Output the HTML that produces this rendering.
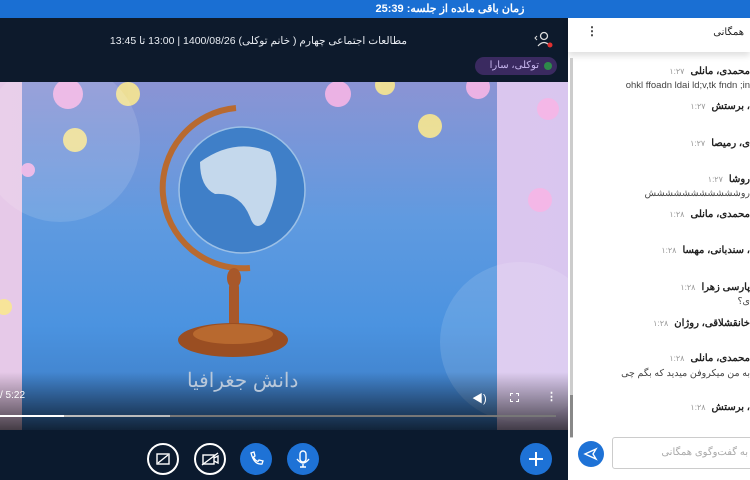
<!DOCTYPE html>
<html><head><meta charset="utf-8"><style>
*{margin:0;padding:0;box-sizing:border-box}
body{width:750px;height:480px;overflow:hidden;font-family:"Liberation Sans","Noto Sans CJK SC",sans-serif;background:#fff;position:relative}
.top{position:absolute;left:0;top:0;width:750px;height:18px;background:#1a6fd3;color:#fff;font-size:11px;font-weight:bold;text-align:center;line-height:18px;padding-left:150px}
.left{position:absolute;left:0;top:18px;width:568px;height:462px;background:#0d1a2c}
.hdr{position:absolute;right:343px;top:35px;color:#e8ecf2;font-size:10.5px;direction:rtl;white-space:nowrap}
.tag{position:absolute;left:475px;top:57px;width:82px;height:18px;border-radius:9px;background:#3a2a60;color:#c9b8f0;font-size:10px;direction:rtl;line-height:18px;padding-right:18px}
.tag:after{content:"";position:absolute;right:5px;top:5px;width:8px;height:8px;border-radius:50%;background:#2e8a4a}
.video{position:absolute;left:0;top:82px;width:568px;height:348px;background:linear-gradient(90deg,#e6c9e8,#d9c6ef);overflow:hidden}
.inner{position:absolute;left:22px;top:0;width:475px;height:348px;background:linear-gradient(180deg,#8b94d4 0%,#5f9ae0 40%,#4b93e0 70%,#3a78c0 100%)}
.shade{position:absolute;left:0;top:290px;width:568px;height:58px;background:linear-gradient(180deg,rgba(0,0,0,0),rgba(0,0,0,.7))}
.bottom{position:absolute;left:0;top:430px;width:568px;height:50px;background:#0b1a2e}
.btn{position:absolute;top:443px;width:32px;height:32px;border-radius:50%;background:#1e72d6}
.obtn{position:absolute;top:443px;width:32px;height:32px;border-radius:50%;border:2px solid #fff}
.right{position:absolute;left:568px;top:18px;width:182px;height:462px;background:#fff}
.msg{position:absolute;right:0;direction:rtl;font-size:10px;color:#222;white-space:nowrap}
.msg b{font-weight:bold}
.msg span{color:#999;font-size:8px;margin-right:6px}
.txt{position:absolute;right:0;direction:rtl;font-size:9.5px;color:#444;white-space:nowrap}
</style></head><body>
<div class="top">زمان باقی مانده از جلسه: 25:39</div>
<div class="left"></div>
<div class="hdr">مطالعات اجتماعی چهارم ( خانم توکلی) 1400/08/26 | 13:00 تا 13:45</div>
<svg style="position:absolute;left:534px;top:30px" width="20" height="20"><circle cx="10" cy="6" r="3.5" fill="none" stroke="#ddd" stroke-width="1.3"/><path d="M4 16 Q10 9 16 16" fill="none" stroke="#ddd" stroke-width="1.3"/><path d="M3 6 L1 8 L3 10" fill="none" stroke="#ddd"/><circle cx="16" cy="15" r="2.5" fill="#e03030"/></svg>
<div class="tag">توکلی، سارا</div>
<div class="video">
 <div class="inner"></div>
 <svg style="position:absolute;left:0;top:0" width="568" height="348">
  <g fill="#f6b5e6" opacity=".9"><circle cx="68" cy="12" r="15"/><circle cx="338" cy="12" r="13"/><circle cx="478" cy="5" r="12"/><circle cx="548" cy="27" r="11"/><circle cx="540" cy="118" r="12"/><circle cx="28" cy="88" r="7"/></g>
  <g fill="#f8e790" opacity=".9"><circle cx="128" cy="12" r="12"/><circle cx="430" cy="44" r="12"/><circle cx="75" cy="58" r="12"/><circle cx="385" cy="3" r="10"/><circle cx="4" cy="225" r="8"/></g>
  <g fill="#fff" opacity=".12"><circle cx="60" cy="60" r="80"/><circle cx="520" cy="260" r="80"/></g>
  <path d="M236 26 A80 80 0 0 0 250 186" fill="none" stroke="#b86a30" stroke-width="6"/>
  <circle cx="242" cy="108" r="63" fill="#3f7fc8"/>
  <path d="M200 80 Q235 55 270 70 Q285 100 265 140 Q255 150 250 135 Q240 110 215 112 Q200 105 200 80Z" fill="#c4d8ec"/>
  <circle cx="242" cy="108" r="63" fill="none" stroke="#9cc0e6" stroke-width="1.5"/>
  <ellipse cx="234" cy="196" rx="7" ry="10" fill="#a8582a"/>
  <rect x="229" y="200" width="10" height="50" rx="5" fill="#a8582a"/>
  <ellipse cx="233" cy="258" rx="55" ry="17" fill="#9a4e22"/>
  <ellipse cx="233" cy="252" rx="40" ry="10" fill="#b8692f"/>
 </svg>
 <div class="shade"></div>
 <div style="position:absolute;left:187px;top:286px;font-size:20px;color:#b9c8da;direction:rtl">دانش جغرافیا</div>
 <div style="position:absolute;left:0;top:308px;font-size:10px;color:#fff">/ 5:22</div>
 <div style="position:absolute;left:0;top:333px;width:556px;height:2px;background:#777"></div>
 <div style="position:absolute;left:0;top:333px;width:170px;height:2px;background:#bbb"></div>
 <div style="position:absolute;left:0;top:333px;width:64px;height:2px;background:#fff"></div>
 <div style="position:absolute;left:472px;top:308px;color:#fff;font-size:11px">◀)</div>
 <div style="position:absolute;left:510px;top:311px;width:9px;height:9px;border:1.5px dashed #fff"></div>
 <div style="position:absolute;left:546px;top:308px;color:#fff;font-size:11px;font-weight:bold">⋮</div>
</div>
<div class="bottom"></div>
<div class="obtn" style="left:147px"><svg width="28" height="28"><rect x="8" y="9" width="12" height="10" fill="none" stroke="#fff" stroke-width="1.4"/><path d="M9 18 L19 10" stroke="#fff" stroke-width="1.4"/></svg></div>
<div class="obtn" style="left:194px"><svg width="28" height="28"><rect x="7" y="10" width="11" height="9" fill="none" stroke="#fff" stroke-width="1.4"/><path d="M18 13 L22 11 V18 L18 16 M6 20 L22 8" fill="none" stroke="#fff" stroke-width="1.4"/></svg></div>
<div class="btn" style="left:240px"><svg width="32" height="32"><path d="M11 10 L14 9 L15 13 L13.5 14 Q15 17.5 18 18.5 L19 17 L23 18 L22 21 Q14 22 11 10Z" fill="none" stroke="#fff" stroke-width="1.3"/></svg></div>
<div class="btn" style="left:287px"><svg width="32" height="32"><rect x="13" y="8" width="6" height="11" rx="3" fill="none" stroke="#fff" stroke-width="1.4"/><path d="M10 16 Q16 24 22 16 M16 21 V24 M13 24 H19" fill="none" stroke="#fff" stroke-width="1.4"/></svg></div>
<div class="btn" style="left:520px"><svg width="32" height="32"><path d="M16 9 V23 M9 16 H23" stroke="#fff" stroke-width="2"/></svg></div>
<div class="right"></div>
<div style="position:absolute;left:568px;top:18px;width:182px;height:34px;background:#fff;box-shadow:0 4px 6px rgba(0,0,0,.12)"></div>
<div style="position:absolute;right:6px;top:27px;font-size:10px;direction:rtl;color:#222">همگانی</div>
<div style="position:absolute;left:586px;top:24px;font-size:12px;font-weight:bold;color:#333">⋮</div>
<div style="position:absolute;left:570px;top:58px;width:3px;height:380px;background:#ccc"></div>
<div style="position:absolute;left:570px;top:395px;width:3px;height:42px;background:#888"></div>
<div class="msg" style="top:66px"><b>محمدی، مانلی</b><span>۱:۲۷</span></div>
<div class="txt" style="top:80px">ohkl ffoadn ldai ld;v,tk fndn ;in</div>
<div class="msg" style="top:101px"><b>، برستش</b><span>۱:۲۷</span></div>
<div class="msg" style="top:138px"><b>ی، رمیصا</b><span>۱:۲۷</span></div>
<div class="msg" style="top:174px"><b>روشا</b><span>۱:۲۷</span></div>
<div class="txt" style="top:188px">روششششششششششش</div>
<div class="msg" style="top:209px"><b>محمدی، مانلی</b><span>۱:۲۸</span></div>
<div class="msg" style="top:245px"><b>، سندبانی، مهسا</b><span>۱:۲۸</span></div>
<div class="msg" style="top:282px"><b>پارسی زهرا</b><span>۱:۲۸</span></div>
<div class="txt" style="top:296px">ی؟</div>
<div class="msg" style="top:318px"><b>خانقشلاقی، روژان</b><span>۱:۲۸</span></div>
<div class="msg" style="top:353px"><b>محمدی، مانلی</b><span>۱:۲۸</span></div>
<div class="txt" style="top:368px">به من میکروفن میدید که بگم چی</div>
<div class="msg" style="top:402px"><b>، برستش</b><span>۱:۲۸</span></div>
<div style="position:absolute;left:578px;top:441px;width:26px;height:26px;border-radius:50%;background:#1e72d6"><svg width="26" height="26"><path d="M18 8 L7 13 L18 18 L15 13Z" fill="none" stroke="#fff" stroke-width="1.4"/></svg></div>
<div style="position:absolute;left:612px;top:437px;width:145px;height:32px;border:1px solid #ccc;border-radius:3px;font-size:10px;color:#aaa;direction:rtl;padding:9px 8px 0 0">به گفت‌وگوی همگانی</div>
</body></html>
